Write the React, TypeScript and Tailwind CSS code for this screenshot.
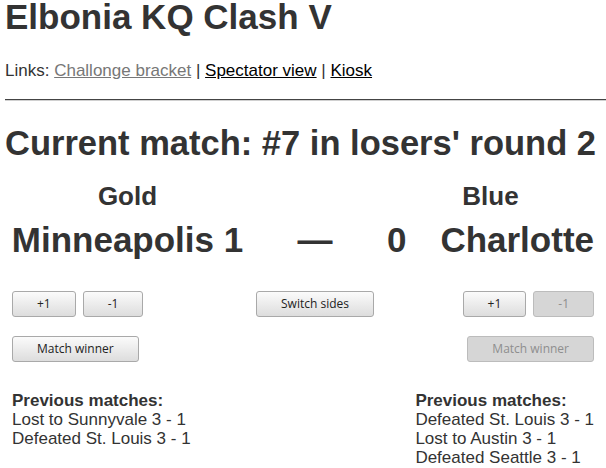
import clsx from "clsx";

type BtnProps = { children: React.ReactNode; disabled?: boolean };

function Btn({ children, disabled }: BtnProps) {
  return (
    <button
      disabled={disabled}
      className={clsx(
        "h-[26px] px-6 rounded-[3px] border text-[12px] leading-none font-['Open_Sans',sans-serif]",
        disabled
          ? "border-[#bcbcbc] bg-[#d6d6d6] text-[#8e8e8e]"
          : "border-[#a9a9a9] bg-linear-to-b from-[#fbfbfb] to-[#dddddd] text-[#222]"
      )}
    >
      {children}
    </button>
  );
}

const gold = ["Lost to Sunnyvale 3 - 1", "Defeated St. Louis 3 - 1"];
const blue = ["Defeated St. Louis 3 - 1", "Lost to Austin 3 - 1", "Defeated Seattle 3 - 1"];

export default function App() {
  return (
    <div className="min-h-screen bg-white px-[5px] pt-px text-[#333] font-['Liberation_Sans',Arial,sans-serif]">
      <h1 className="-mt-[4px] text-[35px] font-bold leading-[40px]">Elbonia KQ Clash V</h1>

      <p className="mt-[24px] text-[17px] leading-[20px]">
        Links:{" "}
        <a href="#" className="text-[#777] underline">
          Challonge bracket
        </a>{" "}
        |{" "}
        <a href="#" className="text-black underline">
          Spectator view
        </a>{" "}
        |{" "}
        <a href="#" className="text-black underline">
          Kiosk
        </a>
      </p>

      <div className="mt-[18px] -mr-[5px] border-t border-b border-t-[#444] border-b-[#d0d0d0]" />

      <h2 className="mt-[22px] text-[34.5px] font-bold leading-[40px] whitespace-nowrap">
        Current match: #7 in losers' round 2
      </h2>

      {/* match board */}
      <div className="mt-[18px] px-[7px] grid grid-cols-[231px_144px_1fr]">
        <div className="flex justify-center text-[26px] font-bold leading-[30px]">Gold</div>
        <div />
        <div className="flex justify-center text-[26px] font-bold leading-[30px]">Blue</div>

        <div className="mt-[9px] flex justify-center text-[35px] font-bold leading-[40px] whitespace-nowrap">
          Minneapolis 1
        </div>
        <div className="mt-[9px] flex justify-center text-[35px] font-bold leading-[40px]">—</div>
        <div className="mt-[9px] flex justify-between text-[35px] font-bold leading-[40px] whitespace-nowrap">
          <span>0</span>
          <span>Charlotte</span>
        </div>

        <div className="mt-[31px] flex gap-[7px]">
          <Btn>+1</Btn>
          <Btn>-1</Btn>
        </div>
        <div className="mt-[31px] flex justify-center">
          <Btn>Switch sides</Btn>
        </div>
        <div className="mt-[31px] flex justify-end gap-[7px]">
          <Btn>+1</Btn>
          <Btn disabled>-1</Btn>
        </div>

        <div className="mt-[19px] flex">
          <Btn>Match winner</Btn>
        </div>
        <div />
        <div className="mt-[19px] flex justify-end">
          <Btn disabled>Match winner</Btn>
        </div>
      </div>

      <div className="mt-[29px] px-[7px] flex justify-between text-[17px] leading-[19px]">
        <div>
          <div className="font-bold">Previous matches:</div>
          {gold.map((m) => (
            <div key={m}>{m}</div>
          ))}
        </div>
        <div>
          <div className="font-bold">Previous matches:</div>
          {blue.map((m) => (
            <div key={m}>{m}</div>
          ))}
        </div>
      </div>
    </div>
  );
}
